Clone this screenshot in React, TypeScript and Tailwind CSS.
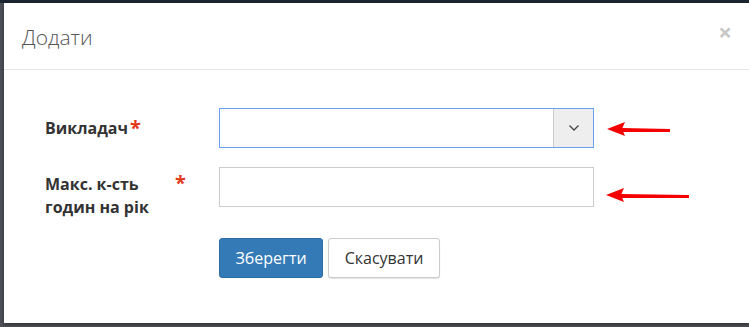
import React from "react";

function Arrow({ len, dy }: { len: number; dy: number }) {
  return (
    <svg width={len + 4} height={24} viewBox={`0 0 ${len + 4} 24`} className="block">
      <path d={`M16 ${11} L${len} ${11 + dy} L${len} ${14 + dy} L16 ${15} Z`} fill="#f40000" />
      <path d="M1 12 L19 5 L16 12 L19 19 Z" fill="#f40000" />
    </svg>
  );
}

export default function App() {
  return (
    <div className="w-[749px] h-[327px] bg-[#4f5157] flex flex-col overflow-hidden" style={{ fontFamily: '"Open Sans", "Noto Sans", sans-serif' }}>
      <div className="h-[3px] bg-[#1d2531] shrink-0" />
      <div className="flex flex-1 pb-[4px]">
        <div className="w-[4px] shrink-0 bg-[#4c5058]" />
        <div className="flex-1 bg-white flex flex-col shadow-[0_2px_4px_rgba(0,0,0,0.4)]">
          <div className="h-[67px] border-b border-[#e5e5e5] flex items-center justify-between pl-[18px] pr-[17px]">
            <span className="text-[21px] text-[#555] font-light leading-none mt-[2px]">Додати</span>
            <span className="text-[24px] text-[#c7c7c7] font-bold leading-none mt-[-8px]">×</span>
          </div>
          <div className="pl-[41px] pt-[38px] flex flex-col">
            <div className="flex items-center h-[40px]">
              <div className="w-[174px] text-[16px] font-bold text-[#333] flex items-center">
                <span>Викладач</span>
                <span className="text-[#e4381b] ml-[2px] text-[20px] leading-none">*</span>
              </div>
              <div className="w-[375px] h-[40px] border border-[#66a1f0] flex">
                <div className="flex-1" />
                <div className="w-[40px] bg-[#eeeeee] border-l border-[#cccccc] flex items-center justify-center">
                  <svg width="12" height="8" viewBox="0 0 12 8">
                    <path d="M1.5 1.5 L6 6 L10.5 1.5" stroke="#444" strokeWidth="1.3" fill="none" />
                  </svg>
                </div>
              </div>
              <div className="ml-[12px] mt-[2px]">
                <Arrow len={64} dy={1} />
              </div>
            </div>
            <div className="flex items-start mt-[19px]">
              <div className="w-[174px] text-[16px] font-bold text-[#333] flex items-start pt-[6px] leading-[23px]">
                <span className="w-[130px]">Макс. к-сть годин на рік</span>
                <span className="text-[#e4381b] text-[20px] leading-[20px]">*</span>
              </div>
              <div className="w-[375px] h-[40px] border border-[#cccccc]" />
              <div className="ml-[11px] mt-[16px]">
                <Arrow len={84} dy={1} />
              </div>
            </div>
            <div className="flex mt-[19px] ml-[174px] gap-[5px]">
              <button className="h-[40px] w-[104px] rounded-[3px] bg-[#337ab7] text-white text-[16px] border border-[#2e6da4]">Зберегти</button>
              <button className="h-[40px] w-[112px] rounded-[3px] bg-white text-[#333] text-[16px] border border-[#ccc] shadow-[0_1px_1px_rgba(0,0,0,0.12)]">Скасувати</button>
            </div>
          </div>
        </div>
      </div>
    </div>
  );
}
